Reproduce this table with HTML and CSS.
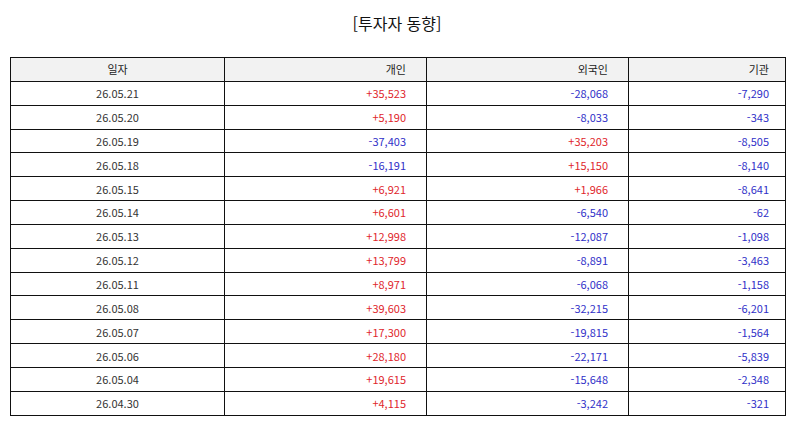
FILE: index.html
```html
<!DOCTYPE html>
<html lang="ko">
<head>
<meta charset="utf-8">
<link rel="stylesheet" href="styles.css">
</head>
<body>
<h1 class="title">[투자자 동향]</h1>
<table class="inv">
<colgroup><col class="c1"><col class="c2"><col class="c3"><col class="c4"></colgroup>
<thead>
<tr><th class="ctr">일자</th><th>개인</th><th>외국인</th><th>기관</th></tr>
</thead>
<tbody>
<tr><td class="ctr">26.05.21</td><td class="up">+35,523</td><td class="dn">-28,068</td><td class="dn">-7,290</td></tr>
<tr><td class="ctr">26.05.20</td><td class="up">+5,190</td><td class="dn">-8,033</td><td class="dn">-343</td></tr>
<tr><td class="ctr">26.05.19</td><td class="dn">-37,403</td><td class="up">+35,203</td><td class="dn">-8,505</td></tr>
<tr><td class="ctr">26.05.18</td><td class="dn">-16,191</td><td class="up">+15,150</td><td class="dn">-8,140</td></tr>
<tr><td class="ctr">26.05.15</td><td class="up">+6,921</td><td class="up">+1,966</td><td class="dn">-8,641</td></tr>
<tr><td class="ctr">26.05.14</td><td class="up">+6,601</td><td class="dn">-6,540</td><td class="dn">-62</td></tr>
<tr><td class="ctr">26.05.13</td><td class="up">+12,998</td><td class="dn">-12,087</td><td class="dn">-1,098</td></tr>
<tr><td class="ctr">26.05.12</td><td class="up">+13,799</td><td class="dn">-8,891</td><td class="dn">-3,463</td></tr>
<tr><td class="ctr">26.05.11</td><td class="up">+8,971</td><td class="dn">-6,068</td><td class="dn">-1,158</td></tr>
<tr><td class="ctr">26.05.08</td><td class="up">+39,603</td><td class="dn">-32,215</td><td class="dn">-6,201</td></tr>
<tr><td class="ctr">26.05.07</td><td class="up">+17,300</td><td class="dn">-19,815</td><td class="dn">-1,564</td></tr>
<tr><td class="ctr">26.05.06</td><td class="up">+28,180</td><td class="dn">-22,171</td><td class="dn">-5,839</td></tr>
<tr><td class="ctr">26.05.04</td><td class="up">+19,615</td><td class="dn">-15,648</td><td class="dn">-2,348</td></tr>
<tr><td class="ctr">26.04.30</td><td class="up">+4,115</td><td class="dn">-3,242</td><td class="dn">-321</td></tr>
</tbody>
</table>
</body>
</html>
```
FILE: styles.css
```css
html, body {
  margin: 0;
  padding: 0;
  background: #ffffff;
}
body {
  font-family: "Noto Sans CJK KR", "Noto Sans", sans-serif;
  color: #333333;
}
.title {
  margin: 0;
  padding-top: 11px;
  height: 57px;
  box-sizing: border-box;
  text-align: center;
  font-size: 16px;
  font-weight: normal;
  line-height: 24px;
  color: #111111;
}
.inv {
  margin-left: 10px;
  width: 775px;
  border-collapse: collapse;
  table-layout: fixed;
  font-size: 11px;
}
.c1 { width: 214px; }
.c2 { width: 202px; }
.c3 { width: 202px; }
.c4 { width: 157px; }
.inv th, .inv td {
  border: 1px solid #111111;
  height: 23.85px;
  padding: 0 20px 0 0;
  box-sizing: border-box;
  text-align: right;
  line-height: 14px;
  font-weight: normal;
}
.inv th:last-child, .inv td:last-child {
  padding-right: 16px;
}
.inv th {
  background: #f2f2f2;
  color: #222222;
}
.inv .ctr {
  text-align: center;
  padding: 0;
}
.up { color: #e0262c; }
.dn { color: #3030c8; }
```
